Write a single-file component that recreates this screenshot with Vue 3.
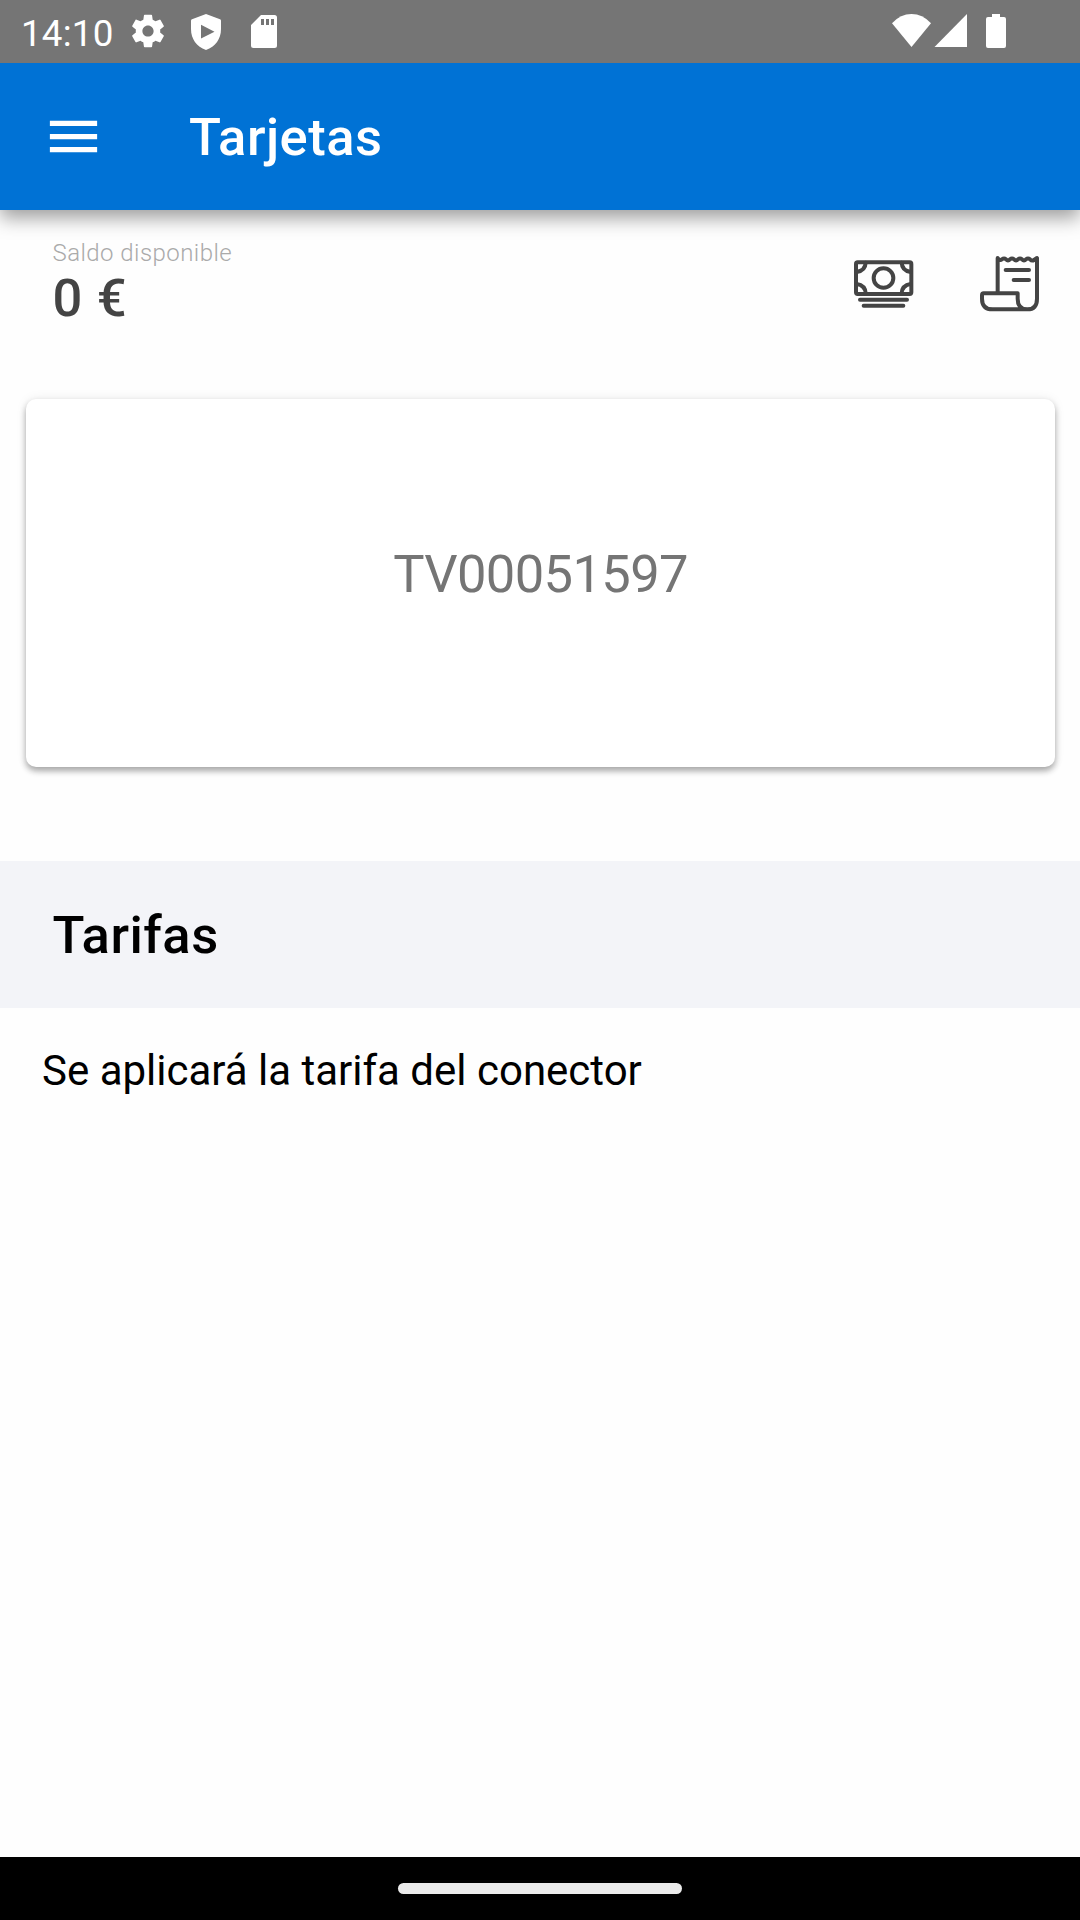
<script setup>
import { ref } from "vue";

const balance = ref('0 €');
const card = ref('TV00051597');
const rate = ref('Se aplicará la tarifa del conector');
</script>

<template>
  <div class="screen">
    <div class="status">
      <span class="time">14:10</span>
      <svg class="gear" viewBox="2 2 20 20">
        <path d="M19.14 12.94c.04-.3.06-.61.06-.94 0-.32-.02-.64-.07-.94l2.03-1.58a.49.49 0 0 0 .12-.61l-1.92-3.32a.488.488 0 0 0-.59-.22l-2.39.96c-.5-.38-1.03-.7-1.62-.94l-.36-2.54a.484.484 0 0 0-.48-.41h-3.84c-.24 0-.43.17-.47.41l-.36 2.54c-.59.24-1.13.57-1.62.94l-2.39-.96c-.22-.08-.47 0-.59.22L2.74 8.87c-.12.21-.08.47.12.61l2.03 1.58c-.05.3-.09.63-.09.94s.02.64.07.94l-2.03 1.58a.49.49 0 0 0-.12.61l1.92 3.32c.12.22.37.29.59.22l2.39-.96c.5.38 1.03.7 1.62.94l.36 2.54c.05.24.24.41.48.41h3.84c.24 0 .44-.17.47-.41l.36-2.54c.59-.24 1.13-.56 1.62-.94l2.39.96c.22.08.47 0 .59-.22l1.92-3.32c.12-.22.07-.47-.12-.61l-2.01-1.58zM12 15.3c-1.82 0-3.3-1.48-3.3-3.3s1.48-3.3 3.3-3.3 3.3 1.48 3.3 3.3-1.48 3.3-3.3 3.3z" />
      </svg>
      <svg class="shield" viewBox="0 0 30 36">
        <path fill-rule="evenodd" d="M15 0L29 5.2Q30 5.6 30 6.8V15C30 25 24.5 32.5 15 36C5.5 32.5 0 25 0 15V6.8Q0 5.6 1 5.2ZM10 10.8V24.5L23.5 17.7Z" />
      </svg>
      <svg class="sd" viewBox="0 0 26 33">
        <path fill-rule="evenodd" d="M10 0H23.5Q26 0 26 2.5V30.5Q26 33 23.5 33H2.5Q0 33 0 30.5V10ZM10 4V10H13V4ZM15 4V10H18V4ZM20 4V10H23V4Z" />
      </svg>
      <svg class="signals" viewBox="0 0 116 36">
        <path d="M0 9.2Q8.5 0 19.5 0T39 9.2L19.5 33Z" />
        <path d="M75 0V33H42.5Z" />
        <path d="M100 0H108V3H112Q114 3 114 5V32Q114 34 112 34H96Q94 34 94 32V5Q94 3 96 3H100Z" />
      </svg>
    </div>

    <div class="toolbar">
      <svg class="menu" viewBox="0 0 24 24">
        <path d="M3 18h18v-2H3v2zm0-5h18v-2H3v2zm0-7v2h18V6H3z" />
      </svg>
      <div class="title">Tarjetas</div>
    </div>

    <div class="balance">
      <div class="amounts">
        <div class="label">Saldo disponible</div>
        <div class="amount">{{ balance }}</div>
      </div>
      <svg class="icon" viewBox="72 72 180 180">
        <rect x="78" y="97" width="166" height="95" rx="5" />
        <circle cx="160.5" cy="144" r="29.5" />
        <path d="M107 98Q106 122 80 126M215 98Q216 122 242 126M107 190Q106 166 80 162M215 190Q216 166 242 162" />
        <path d="M90 209H231M101 227H220" />
      </svg>
      <svg class="icon" viewBox="450 72 180 180">
        <path d="M503 190V84Q509 94 516 88Q522 83 528 88Q534 94 540 88Q546 83 552 88Q558 94 564 88Q570 83 576 88Q582 94 588 88Q594 83 600 88Q606 94 612 90L621 84V206Q621 238 592 238Q563 238 563 206V190H461Q456 190 456 196V206Q456 238 488 238H592" />
        <path d="M527 120H597M551 150H597" />
      </svg>
    </div>

    <div class="card">{{ card }}</div>

    <div class="section">Tarifas</div>
    <div class="rate">{{ rate }}</div>

    <div class="navbar">
      <div class="pill"></div>
    </div>
  </div>
</template>

<style>
body {
  margin: 0;
  background: #fefefe;
}
</style>

<style scoped>
.screen {
  display: flex;
  flex-direction: column;
  width: 1080px;
  height: 1920px;
  overflow: hidden;
  background: #fefefe;
  font-family: Roboto, "Liberation Sans", sans-serif;
}
.status {
  display: flex;
  align-items: flex-start;
  box-sizing: border-box;
  height: 63px;
  padding: 14px 0 0 21px;
  background: #757575;
  color: #fff;
  fill: #fff;
}
.time {
  width: 110px;
  font-size: 36.75px;
  line-height: 39px;
  letter-spacing: 0.2px;
}
.gear {
  width: 34px;
  height: 34px;
}
.shield {
  width: 30px;
  height: 36px;
  margin-left: 26px;
}
.sd {
  width: 26px;
  height: 33px;
  margin: 1px 0 0 30px;
}
.signals {
  width: 116px;
  height: 36px;
  margin-left: 615px;
}
.toolbar {
  position: relative;
  display: flex;
  align-items: center;
  height: 147px;
  background: #0072d5;
  color: #fff;
  box-shadow: 0 8px 18px rgba(0, 0, 0, 0.38);
  clip-path: inset(0 0 -40px 0);
}
.menu {
  width: 63px;
  height: 63px;
  margin: 0 84px 0 42px;
  fill: #fff;
}
.title {
  padding-top: 2px;
  font-size: 52.5px;
  font-weight: 500;
  letter-spacing: 0.5px;
  line-height: 145px;
}
.balance {
  display: flex;
  height: 188px;
}
.amounts {
  flex: 1;
  padding: 28px 0 0 52.5px;
}
.label {
  font-size: 24px;
  font-weight: 300;
  line-height: 30px;
  letter-spacing: 0.45px;
  color: #aaa;
}
.amount {
  font-size: 52.5px;
  font-weight: 500;
  line-height: 60px;
  letter-spacing: 0.65px;
  color: #444;
}
.icon {
  width: 60px;
  height: 60px;
  margin: 44px 40px 0 26px;
  fill: none;
  stroke: #444;
  stroke-width: 12;
  stroke-linecap: round;
  stroke-linejoin: round;
}
.card {
  box-sizing: border-box;
  height: 368px;
  margin: 1px 25px 94px 26px;
  padding-top: 144px;
  border-radius: 10px;
  background: #fff;
  box-shadow: 0 4px 6px rgba(0, 0, 0, 0.32), 0 0 11px rgba(0, 0, 0, 0.08);
  font-size: 52.5px;
  line-height: 62px;
  letter-spacing: -0.65px;
  text-align: center;
  color: #757575;
}
.section {
  padding: 2px 0 0 52.5px;
  background: #f3f4f8;
  font-size: 52.5px;
  font-weight: 500;
  letter-spacing: 0.5px;
  line-height: 145px;
}
.rate {
  flex: 1;
  padding: 38px 42px 0;
  font-size: 42px;
  line-height: 50px;
}
.navbar {
  display: flex;
  align-items: center;
  justify-content: center;
  height: 63px;
  background: #000;
}
.pill {
  width: 284px;
  height: 11px;
  border-radius: 6px;
  background: #ebebeb;
}
</style>
